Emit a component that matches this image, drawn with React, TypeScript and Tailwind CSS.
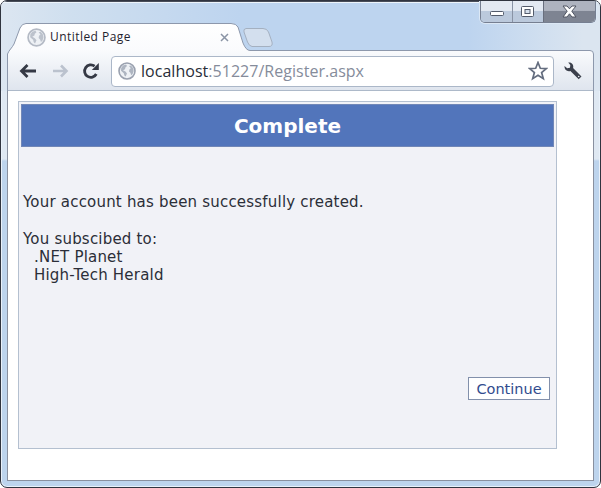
import React from "react";

const Globe = ({ size, ring = "#9aa1af", land = "#aeb5c1" }: { size: number; ring?: string; land?: string }) => (
  <svg width={size} height={size} viewBox="0 0 18 18" className="block shrink-0">
    <circle cx="9" cy="9" r="8" fill="#eef1f5" stroke={ring} strokeWidth="1.6" />
    <path d="M3.2 6L5 3.6L8 2.6L9 4L7.4 5.4L7 7.2L5 8.2L7.4 9.6L9 11.6L7.6 14.6L6.4 13.6L5.8 11.2L3 8.8Z" fill={land} />
    <path d="M11 4L13 3.6L15 6L15.6 9L14.6 12L13.2 13.2L12.4 10.8L11 9.4L11.4 7.4L12.8 6.2Z" fill={land} />
  </svg>
);

const TabShape = () => (
  <svg width="601" height="91" viewBox="0 0 601 91" className="absolute left-0 top-0">
    <defs>
      <linearGradient id="bar" x1="0" y1="23" x2="0" y2="90" gradientUnits="userSpaceOnUse">
        <stop offset="0" stopColor="#fff" />
        <stop offset=".4" stopColor="#fafbfd" />
        <stop offset="1" stopColor="#dfe5ee" />
      </linearGradient>
    </defs>
    <path d="M7.5 91V54C9 50 12 48 14 44L20 28Q22 23.5 26 23.5H231Q236 23.5 238 27L243 43Q246 50.5 250 50.5H590Q593.5 50.5 593.5 54V91Z" fill="url(#bar)" stroke="#8d98ac" />
    <path d="M8 90.5H593" stroke="#adb9c9" />
    <path d="M246 28.5H263Q267 28.5 268.5 32L272 42Q273 46.5 269 46.5H252Q249 46 247.5 42L244 32Q243 29 246 28.5Z" fill="#d3dfee" stroke="#a4b0c0" />
  </svg>
);

const WindowButtons = () => (
  <div className="relative ml-auto mr-[4px] flex h-[22px] w-[116px] overflow-hidden rounded-b-[5px] border border-t-0 border-[#767f91] shadow-[0_0_0_1px_#dce8f5]">
    <div className="flex w-[32px] items-center justify-center border-r border-[#8993a5] bg-linear-to-b from-[#e3e9f2] from-45% to-[#bbc9dc] to-50%">
      <svg width="14" height="6" className="mt-[5px]"><rect x=".5" y=".5" width="13" height="4" rx="1" fill="#fff" stroke="#535b6b" /></svg>
    </div>
    <div className="flex w-[31px] items-center justify-center border-r border-[#686e7d] bg-linear-to-b from-[#e3e9f2] from-45% to-[#bbc9dc] to-50%">
      <svg width="14" height="12"><rect x=".5" y=".5" width="12" height="10" rx="1" fill="#fff" stroke="#535b6b" /><rect x="4" y="3.5" width="5" height="4" fill="#d5dfec" stroke="#535b6b" /></svg>
    </div>
    <div className="flex flex-1 items-center justify-center bg-linear-to-b from-[#aeb3bf] from-45% to-[#7e8492] to-50%">
      <svg width="15" height="13" viewBox="0 0 15 13"><path d="M1 1H5L7.5 3.8L10 1H14L9.8 6.2L14 12H10L7.5 8.8L5 12H1L5.2 6.2Z" fill="#fff" stroke="#505562" /></svg>
    </div>
  </div>
);

export default function App() {
  return (
    <div className="h-[488px] w-[601px] overflow-hidden bg-white">
      <div className="relative flex h-full flex-col overflow-hidden rounded-[7px] border border-[#30343f] bg-linear-to-b from-[#dfe8f2] from-[158px] to-[#bdd4ed] to-[160px] shadow-[inset_0_0_0_1px_#e9f1fa]">
        <div className="absolute -left-px -top-px h-[91px] w-[601px] bg-[linear-gradient(90deg,#dce6f1_0%,#cfdfef_12%,#bdd4ef_40%,#bdd4ef_78%,#dbe5f0_97%)] shadow-[inset_0_2px_0_#484d59,inset_0_3px_0_#edf4fb]">
          <TabShape />
        </div>

        <div className="relative flex h-[22px] shrink-0"><WindowButtons /></div>

        <div className="relative flex h-[28px] shrink-0 items-center pl-[26px]">
          <Globe size={19} ring="#b4bac5" land="#bcc2cc" />
          <span className="ml-[4px] w-[170px] font-['Open_Sans',sans-serif] text-[12px] leading-[16px] tracking-[.45px] text-[#1f232e]">Untitled Page</span>
          <svg width="9" height="9" viewBox="0 0 9 9"><path d="M1 1L8 8M8 1L1 8" stroke="#8a94a5" strokeWidth="1.5" /></svg>
        </div>

        <div className="relative flex h-[40px] shrink-0 items-center pl-[18px]">
          <svg width="18" height="16" viewBox="0 0 18 16"><path d="M8.5 2L2.5 8L8.5 14M3 8H17" fill="none" stroke="#353945" strokeWidth="2.8" /></svg>
          <svg width="17" height="16" viewBox="0 0 17 16" className="ml-[15px]"><path d="M9 2.5L14.5 8L9 13.5M14 8H1" fill="none" stroke="#bbc2ce" strokeWidth="2.6" /></svg>
          <svg width="18" height="18" viewBox="0 0 18 18" className="ml-[13px]"><path d="M14.3 12A6.2 6.2 0 1 1 12.6 4.2" fill="none" stroke="#353945" strokeWidth="2.8" /><path d="M16.8 1V8H9.8Z" fill="#353945" /></svg>
          <div className="ml-[11px] flex h-[31px] w-[443px] items-center rounded-[4px] border border-[#abb7c8] bg-white pl-[6px] pr-[5px]">
            <Globe size={18} />
            <span className="ml-[5px] whitespace-nowrap font-['Open_Sans',sans-serif] text-[16px] leading-[22px] tracking-[.03px] text-[#858c9b]"><span className="text-[#292d38]">localhost</span>:51227/Register.aspx</span>
            <svg width="20" height="20" viewBox="0 0 20 20" className="ml-auto"><path d="M10 1.5L12.3 7.3L18.3 7.6L13.6 11.5L15.3 17.6L10 14.2L4.7 17.6L6.4 11.5L1.7 7.6L7.7 7.3Z" fill="#fff" stroke="#646d7f" strokeWidth="1.7" /></svg>
          </div>
          <svg width="20" height="20" viewBox="0 0 20 20" className="ml-[9px]"><path d="M5.2 1.5C8.8 1 11 3.7 10.1 7L18.5 15.5L15.7 18.3L7.4 10C4 11 1.2 8.5 1.5 5L4.2 7.2L7 6.7L7.3 4Z" fill="#3b404c" /><circle cx="15.7" cy="15.5" r=".8" fill="#e8ecf2" /></svg>
        </div>

        <main className="mb-[6px] ml-[6px] mr-[6px] min-h-0 flex-1 border border-t-0 border-[#89909f] bg-white pl-[10px] pt-[10px]">
          <section className="flex h-[348px] w-[539px] flex-col border border-[#b4c0d0] bg-[#f1f2f7] font-['DejaVu_Sans',sans-serif] text-[15px] leading-[18px] tracking-[.2px] text-[#2b2e38]">
            <h1 className="mx-[2px] mt-[2px] flex h-[43px] items-center justify-center border border-[#7187b7] bg-[#5275bb] text-[20px] font-bold leading-[24px] tracking-normal text-white">Complete</h1>
            <p className="ml-[4px] mt-[46px] whitespace-nowrap">Your account has been successfully created.</p>
            <p className="ml-[4px] mt-[19px]">You subscibed to:</p>
            <p className="ml-[15px]">.NET Planet</p>
            <p className="ml-[15px]">High-Tech Herald</p>
            <button className="ml-auto mr-[6px] mt-[93px] flex h-[23px] w-[82px] items-center justify-center border border-[#8290ab] bg-white text-[14.5px] tracking-normal text-[#314b8e]">Continue</button>
          </section>
        </main>
      </div>
    </div>
  );
}
